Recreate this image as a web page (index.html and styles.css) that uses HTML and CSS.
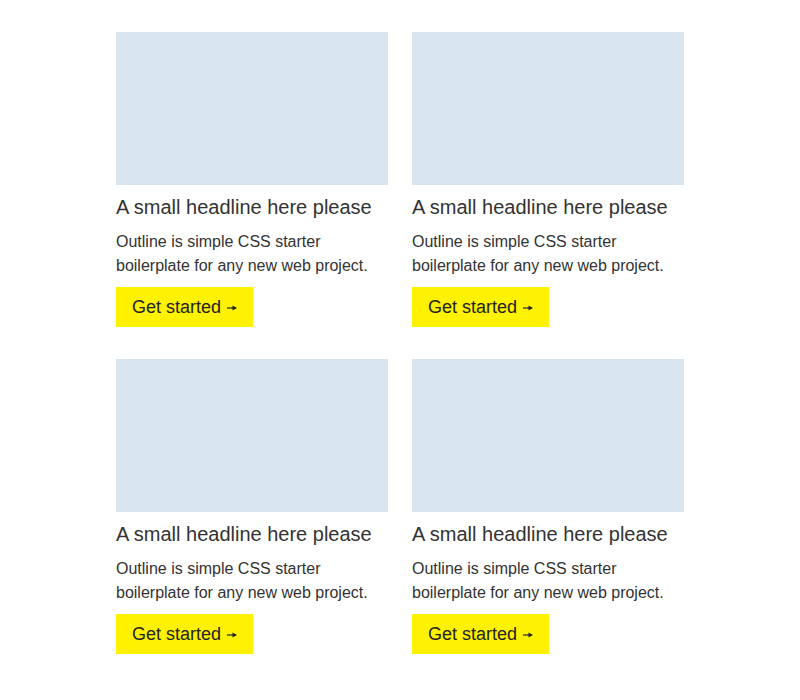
FILE: index.html
```html
<!DOCTYPE html>
<html lang="en">
<head>
<meta charset="utf-8">
<title>Cards</title>
<link rel="stylesheet" href="styles.css">
</head>
<body>
<main class="grid">
  <article class="card">
    <div class="thumb"></div>
    <h3 class="title">A small headline here please</h3>
    <p class="text">Outline is simple CSS starter boilerplate for any new web project.</p>
    <a class="btn" href="#">Get started <svg class="arrow" width="10" height="8" viewBox="0 0 10 8"><path d="M0 4H6.5" stroke="#222" stroke-width="1.2"/><path d="M5.5 1.4L10 4L5.5 6.6Z" fill="#222"/></svg></a>
  </article>
  <article class="card">
    <div class="thumb"></div>
    <h3 class="title">A small headline here please</h3>
    <p class="text">Outline is simple CSS starter boilerplate for any new web project.</p>
    <a class="btn" href="#">Get started <svg class="arrow" width="10" height="8" viewBox="0 0 10 8"><path d="M0 4H6.5" stroke="#222" stroke-width="1.2"/><path d="M5.5 1.4L10 4L5.5 6.6Z" fill="#222"/></svg></a>
  </article>
  <article class="card">
    <div class="thumb"></div>
    <h3 class="title">A small headline here please</h3>
    <p class="text">Outline is simple CSS starter boilerplate for any new web project.</p>
    <a class="btn" href="#">Get started <svg class="arrow" width="10" height="8" viewBox="0 0 10 8"><path d="M0 4H6.5" stroke="#222" stroke-width="1.2"/><path d="M5.5 1.4L10 4L5.5 6.6Z" fill="#222"/></svg></a>
  </article>
  <article class="card">
    <div class="thumb"></div>
    <h3 class="title">A small headline here please</h3>
    <p class="text">Outline is simple CSS starter boilerplate for any new web project.</p>
    <a class="btn" href="#">Get started <svg class="arrow" width="10" height="8" viewBox="0 0 10 8"><path d="M0 4H6.5" stroke="#222" stroke-width="1.2"/><path d="M5.5 1.4L10 4L5.5 6.6Z" fill="#222"/></svg></a>
  </article>
</main>
</body>
</html>
```

FILE: styles.css
```css
html, body {
  margin: 0;
  padding: 0;
  background: #fff;
}
body {
  font-family: "Liberation Sans", Arial, Helvetica, sans-serif;
  color: #333;
}
.grid {
  width: 568px;
  margin: 0 auto;
  padding-top: 32px;
  display: grid;
  grid-template-columns: 272px 272px;
  column-gap: 24px;
  row-gap: 32px;
}
.card {
  display: flex;
  flex-direction: column;
  align-items: flex-start;
}
.thumb {
  width: 100%;
  height: 153px;
  background: #dae6ef;
}
.title {
  margin: 8px 0 9px;
  font-size: 20px;
  line-height: 28px;
  font-weight: 400;
  color: #333;
}
.text {
  margin: 0 0 9px;
  font-size: 16px;
  line-height: 24px;
  color: #333;
}
.btn {
  display: inline-flex;
  align-items: center;
  height: 40px;
  padding: 0 16px;
  background: #fff200;
  color: #222;
  font-size: 18px;
  text-decoration: none;
  white-space: pre;
}
.arrow {
  margin-left: 1px;
  margin-top: 2px;
}
```
